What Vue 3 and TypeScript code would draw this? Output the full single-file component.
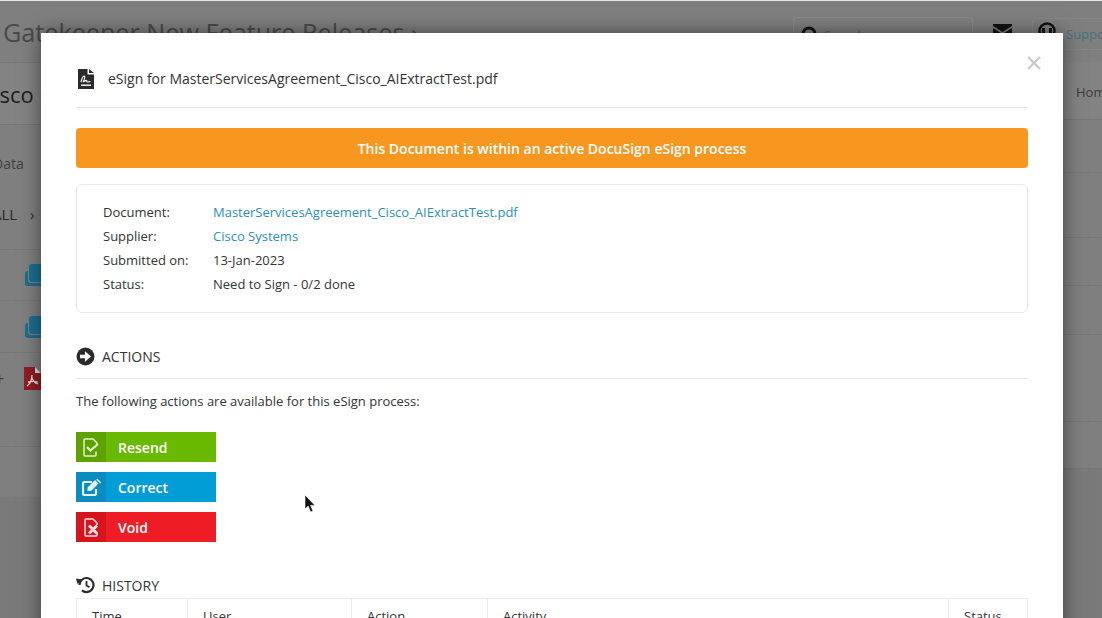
<script setup lang="ts">
interface Row { label: string; value: string; link?: boolean }
const rows: Row[] = [
  { label: 'Document:', value: 'MasterServicesAgreement_Cisco_AIExtractTest.pdf', link: true },
  { label: 'Supplier:', value: 'Cisco Systems', link: true },
  { label: 'Submitted on:', value: '13-Jan-2023' },
  { label: 'Status:', value: 'Need to Sign - 0/2 done' },
]
const columns = [
  { name: 'Time', width: 111 },
  { name: 'User', width: 164 },
  { name: 'Action', width: 136 },
  { name: 'Activity', width: 461 },
  { name: 'Status', width: 80 },
]
const sideRows = [53, 65, 48, 49, 87, 47]
</script>

<template>
  <div class="screen">
    <div class="page">
      <header class="top">
        <h1 class="crumb">Gatekeeper New Feature Releases ›</h1>
        <div class="search">
          <svg width="18" height="18" viewBox="0 0 18 18"><circle cx="8" cy="8" r="6" fill="none" stroke="#111" stroke-width="3" /><path d="M12 12l5 5" stroke="#111" stroke-width="3" /></svg>
          <span>Search...</span>
        </div>
        <svg class="mail" width="19" height="14" viewBox="0 0 19 14"><path d="M0 0h19v2l-9.500 6L0 2zM0 4l9.500 6L19 4v10H0z" fill="#111" /></svg>
        <div class="support">
          <svg class="headset" width="18" height="22" viewBox="0 0 18 22"><circle cx="9" cy="11" r="7.500" fill="none" stroke="#111" stroke-width="2.500" /><rect x="4" y="8" width="3" height="6" fill="#111" /><rect x="11" y="8" width="3" height="6" fill="#111" /></svg>
          <span>Support</span>
        </div>
      </header>
      <div class="panes">
        <div class="left">
          <div class="bar"><span class="vendor">Cisco</span></div>
          <div class="tab">Data</div>
          <div class="all">ALL <i>›</i></div>
          <div class="line">
            <svg class="stack" width="30" height="22" viewBox="0 0 30 22"><path d="M2 10a3 3 0 0 1 3-3v9a3 3 0 0 0 3 3h20a3 3 0 0 1-3 3H5a3 3 0 0 1-3-3z" fill="#1a6f8f" /><path d="M6 3a3 3 0 0 1 3-3h18a3 3 0 0 1 3 3v12a3 3 0 0 1-3 3H9a3 3 0 0 1-3-3z" fill="#1a6f8f" /></svg>
          </div>
          <div class="line second">
            <svg class="stack" width="30" height="22" viewBox="0 0 30 22"><path d="M2 10a3 3 0 0 1 3-3v9a3 3 0 0 0 3 3h20a3 3 0 0 1-3 3H5a3 3 0 0 1-3-3z" fill="#1a6f8f" /><path d="M6 3a3 3 0 0 1 3-3h18a3 3 0 0 1 3 3v12a3 3 0 0 1-3 3H9a3 3 0 0 1-3-3z" fill="#1a6f8f" /></svg>
          </div>
          <div class="line pdf-line">
            <span class="plus">+</span>
            <svg width="17" height="23" viewBox="0 0 17 23"><path d="M0 0h11l6 6v17H0z" fill="#8f1d22" /><path d="M11 0l6 6h-6z" fill="#ddd" /><path d="M3 19c3-2 5-6 5-11M4 15c4-1 7-1 10 0M8 11c1 3 3 5 6 6" fill="none" stroke="#ddd" stroke-width="1.300" /></svg>
          </div>
          <div class="gap"></div>
          <div class="rest"></div>
        </div>
        <div class="right">
          <div class="home">Home</div>
          <div v-for="(h, i) in sideRows" :key="i" class="side" :style="{ height: h + 'px' }"></div>
          <div class="rest"></div>
        </div>
      </div>
    </div>

    <section class="modal">
      <button class="close" type="button" aria-label="Close">
        <svg width="14" height="14" viewBox="0 0 14 14"><path d="M1 1l12 12M13 1L1 13" stroke="#c9c9c9" stroke-width="2.400" /></svg>
      </button>
      <div class="title">
        <svg class="doc" width="16" height="20" viewBox="0 0 16 20">
          <path d="M0 0h9.500v5.500H16V20H0zM11 0l5 4h-5z" fill="#2b2b2b" />
          <path d="M3 13c1-3 1.500-6 3-6s.5 4-1 6c2-1 3-2 3.500-1.500s0 1.500 1 1.500 1.500-.5 3-.5" fill="none" stroke="#fff" stroke-width="1.200" />
          <rect x="3" y="15.500" width="10" height="1.400" fill="#fff" />
        </svg>
        <span>eSign for MasterServicesAgreement_Cisco_AIExtractTest.pdf</span>
      </div>
      <div class="banner">This Document is within an active DocuSign eSign process</div>
      <div class="card">
        <div v-for="row in rows" :key="row.label" class="row">
          <span class="label">{{ row.label }}</span>
          <a v-if="row.link" class="link">{{ row.value }}</a>
          <span v-else>{{ row.value }}</span>
        </div>
      </div>
      <div class="heading rule">
        <svg width="19" height="19" viewBox="0 0 19 19"><circle cx="9.500" cy="9.500" r="9" fill="#2b2b2b" /><path d="M4 7.800h5V4.200l6 5.300-6 5.300v-3.600H4z" fill="#fff" /></svg>
        <span>ACTIONS</span>
      </div>
      <p class="intro">The following actions are available for this eSign process:</p>
      <div class="actions">
        <button class="act green" type="button">
          <span class="ico">
            <svg width="16" height="19" viewBox="0 0 16 19"><path d="M13 13.500V17a1 1 0 0 1-1 1H2a1 1 0 0 1-1-1V2a1 1 0 0 1 1-1h8l4 4v2" fill="none" stroke="#e4f2cd" stroke-width="1.500" /><path d="M4 9l3.500 3.500L15 6" fill="none" stroke="#e4f2cd" stroke-width="2.200" /></svg>
          </span>
          <span>Resend</span>
        </button>
        <button class="act blue" type="button">
          <span class="ico">
            <svg width="19" height="17" viewBox="0 0 19 17"><path d="M14 10v4.500a1.500 1.500 0 0 1-1.500 1.500h-10A1.500 1.500 0 0 1 1 14.500v-10A1.500 1.500 0 0 1 2.500 3H10" fill="none" stroke="#e6f5fb" stroke-width="2.200" /><path d="M5.500 8.500L13 1l3.500 3.500L9 12H5.500zM14 .5l1.500-.5 3.500 3-.5 1.500z" fill="#e6f5fb" /></svg>
          </span>
          <span>Correct</span>
        </button>
        <button class="act red" type="button">
          <span class="ico">
            <svg width="15" height="19" viewBox="0 0 15 19"><path d="M13 14v3a1 1 0 0 1-1 1H2a1 1 0 0 1-1-1V2a1 1 0 0 1 1-1h7l4 4v2" fill="none" stroke="#fde3e4" stroke-width="1.500" /><path d="M5 7.500l8 8M13 7.500l-8 8" stroke="#fde3e4" stroke-width="2.800" /></svg>
          </span>
          <span>Void</span>
        </button>
      </div>
      <div class="heading history">
        <svg width="19" height="18" viewBox="0 0 19 18"><path d="M3.500 9a7 7 0 1 1 2.400 5.300" fill="none" stroke="#2b2b2b" stroke-width="2.200" /><path d="M0 2.500l6 1L1.500 8z" fill="#2b2b2b" /><path d="M10.500 5v4.500l3 1.800" fill="none" stroke="#2b2b2b" stroke-width="1.800" /></svg>
        <span>HISTORY</span>
      </div>
      <div class="table">
        <div v-for="col in columns" :key="col.name" class="cell" :style="{ width: col.width + 'px' }">{{ col.name }}</div>
      </div>
    </section>

    <svg class="cursor" width="12" height="18" viewBox="0 0 12 18"><path d="M1 0v14l3.200-3 2.300 6 2.500-1-2.400-5.600H11z" fill="#111" stroke="#fff" stroke-width=".6" /></svg>
  </div>
</template>

<style scoped>
.screen {
  position: relative;
  width: 1102px;
  height: 618px;
  overflow: hidden;
  background: #7f7f7f;
  border-top: 1px solid #e8e8e8;
  box-sizing: border-box;
  font-family: "Open Sans", "Liberation Sans", sans-serif;
  font-size: 13px;
  color: #333;
}
.page { display: flex; flex-direction: column; height: 100%; color: #3b3b3b; }
.top {
  flex: none;
  display: flex;
  align-items: flex-start;
  height: 61px;
  padding: 13px 0 0 3px;
  box-sizing: border-box;
}
.crumb {
  flex: none;
  margin: 0;
  width: 790px;
  font-size: 25.2px;
  font-weight: 400;
  line-height: 36px;
  color: #4a4a4a;
  white-space: nowrap;
}
.search {
  flex: none;
  display: flex;
  align-items: center;
  gap: 5px;
  width: 180px;
  height: 36px;
  margin-top: 3px;
  padding-left: 7px;
  box-sizing: border-box;
  border: 1px solid #8a8a8a;
  border-radius: 4px;
  color: #47606b;
}
.mail { flex: none; margin: 10px 0 0 20px; }
.support {
  flex: none;
  display: flex;
  align-items: center;
  gap: 10px;
  height: 30px;
  margin: 4px 0 0 20px;
  padding: 0 30px 0 5px;
  border: 1px solid #868686;
  border-radius: 4px 0 0 4px;
  color: #46707f;
  white-space: nowrap;
}
.headset { margin-top: -6px; }
.panes { flex: 1; display: flex; justify-content: space-between; min-height: 0; }
.left, .right { display: flex; flex-direction: column; overflow: hidden; }
.left { width: 41px; }
.right { width: 39px; }
.bar {
  flex: none;
  display: flex;
  align-items: center;
  height: 61px;
  margin-left: -20px;
  border-top: 1px solid #777;
  border-bottom: 1px solid #777;
  box-sizing: content-box;
  background: #838383;
}
.vendor { font-size: 22px; color: #1d1d1d; }
.tab { flex: none; height: 31px; margin-left: -7px; padding-top: 29px; font-size: 14px; line-height: 19px; color: #3f3f3f; }
.all {
  flex: none;
  height: 50px;
  margin-left: -8px;
  padding-top: 14px;
  font-size: 15px;
  color: #2a2a2a;
  border-bottom: 1px solid #777;
  line-height: 30px;
  white-space: nowrap;
}
.all i { margin-left: 9px; font-style: normal; }
.line {
  flex: none;
  display: flex;
  align-items: center;
  height: 51px;
  padding-left: 23px;
  box-sizing: border-box;
  border-bottom: 1px solid #777;
}
.second { height: 52px; }
.stack { flex: none; }
.pdf-line { height: 94px; padding-left: 0; }
.plus { flex: none; width: 24px; margin-left: -5px; margin-right: 5px; font-size: 16px; color: #444; margin-top: -42px; }
.pdf-line svg { flex: none; margin-top: -42px; }
.gap { flex: none; height: 50px; }
.rest { flex: 1; background: #7a7a7a; }
.home {
  flex: none;
  height: 58px;
  padding: 19px 0 0 13px;
  box-sizing: border-box;
  background: #838383;
  border-bottom: 1px solid #777;
  font-size: 13px;
  line-height: 22px;
  color: #3a3a3a;
  white-space: nowrap;
}
.side { flex: none; box-sizing: border-box; border-bottom: 1px solid #777; }
.modal {
  position: absolute;
  left: 41px;
  top: 32px;
  width: 1022px;
  height: 600px;
  padding: 0 35px;
  box-sizing: border-box;
  background: #fff;
  box-shadow: 0 0 18px rgba(0, 0, 0, 0.5);
}
.close {
  position: absolute;
  top: 23px;
  right: 22px;
  display: flex;
  padding: 0;
  border: 0;
  background: none;
}
.title {
  display: flex;
  align-items: center;
  gap: 14px;
  height: 75px;
  padding: 16px 0 0 2px;
  box-sizing: border-box;
  border-bottom: 1px solid #e6e6e6;
  font-size: 14px;
  color: #333;
}
.doc { flex: none; margin-top: 2px; }
.banner {
  margin-top: 20px;
  height: 40px;
  line-height: 41px;
  text-align: center;
  border-radius: 4px;
  background: #f7971f;
  color: #fff;
  font-size: 14px;
  font-weight: 600;
}
.card {
  margin-top: 16px;
  padding: 15px 26px;
  height: 129px;
  box-sizing: border-box;
  border: 1px solid #e8e8e8;
  border-radius: 6px;
}
.row { display: flex; height: 24px; line-height: 24px; }
.label { width: 110px; }
.link { color: #2b8fb3; }
.heading {
  display: flex;
  align-items: center;
  gap: 7px;
  font-size: 14px;
  color: #333;
}
.rule {
  margin-top: 33px;
  height: 21px;
  padding-bottom: 11px;
  border-bottom: 1px solid #e6e6e6;
}
.intro { margin: 13px 0 0; line-height: 18px; }
.actions {
  display: flex;
  flex-direction: column;
  gap: 10px;
  margin-top: 22px;
}
.act {
  display: flex;
  align-items: center;
  width: 140px;
  height: 30px;
  padding: 0;
  border: 0;
  color: #fff;
  font-family: inherit;
  font-size: 14px;
  font-weight: 600;
}
.ico {
  display: flex;
  align-items: center;
  justify-content: center;
  width: 30px;
  height: 30px;
  margin-right: 12px;
}
.green { background: #69b900; }
.green .ico { background: #5ca300; }
.blue { background: #009dd6; }
.blue .ico { background: #0a8cc0; }
.red { background: #ee1c25; }
.red .ico { background: #d5141d; }
.history { margin-top: 33px; height: 20px; }
.table {
  display: flex;
  margin-top: 3px;
  height: 60px;
  border: 1px solid #ececec;
}
.cell {
  flex: none;
  padding: 8px 15px;
  box-sizing: border-box;
  border-right: 1px solid #ececec;
  line-height: 18px;
}
.cell:last-child { border-right: 0; }
.cursor { position: absolute; left: 304px; top: 494px; }
</style>
